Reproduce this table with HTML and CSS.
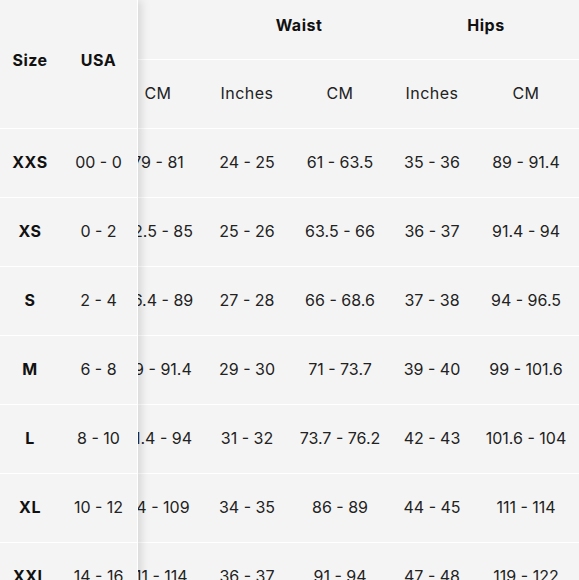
FILE: index.html
```html
<!DOCTYPE html>
<html lang="en">
<head>
<meta charset="utf-8">
<title>Size chart</title>
<link rel="stylesheet" href="styles.css">
</head>
<body>
<div class="chart">
  <div class="fixed">
    <table class="grid">
      <colgroup><col class="c-size"><col class="c-usa"></colgroup>
      <thead>
        <tr class="head"><th class="tall">Size</th><th class="tall">USA</th></tr>
      </thead>
      <tbody>
        <tr><th>XXS</th><td>00 - 0</td></tr>
        <tr><th>XS</th><td>0 - 2</td></tr>
        <tr><th>S</th><td>2 - 4</td></tr>
        <tr><th>M</th><td>6 - 8</td></tr>
        <tr><th>L</th><td>8 - 10</td></tr>
        <tr><th>XL</th><td>10 - 12</td></tr>
        <tr><th>XXL</th><td>14 - 16</td></tr>
      </tbody>
    </table>
  </div>
  <div class="scroller">
    <table class="grid wide">
      <colgroup>
        <col class="w1"><col class="w2"><col class="w3"><col class="w4"><col class="w5">
      </colgroup>
      <thead>
        <tr class="group"><th></th><th colspan="2">Waist</th><th colspan="2">Hips</th></tr>
        <tr class="sub"><th>CM</th><th>Inches</th><th>CM</th><th>Inches</th><th>CM</th></tr>
      </thead>
      <tbody>
        <tr><td>79 - 81</td><td>24 - 25</td><td>61 - 63.5</td><td>35 - 36</td><td>89 - 91.4</td></tr>
        <tr><td>82.5 - 85</td><td>25 - 26</td><td>63.5 - 66</td><td>36 - 37</td><td>91.4 - 94</td></tr>
        <tr><td>86.4 - 89</td><td>27 - 28</td><td>66 - 68.6</td><td>37 - 38</td><td>94 - 96.5</td></tr>
        <tr><td>89 - 91.4</td><td>29 - 30</td><td>71 - 73.7</td><td>39 - 40</td><td>99 - 101.6</td></tr>
        <tr><td>91.4 - 94</td><td>31 - 32</td><td>73.7 - 76.2</td><td>42 - 43</td><td>101.6 - 104</td></tr>
        <tr><td>94 - 109</td><td>34 - 35</td><td>86 - 89</td><td>44 - 45</td><td>111 - 114</td></tr>
        <tr><td>111 - 114</td><td>36 - 37</td><td>91 - 94</td><td>47 - 48</td><td>119 - 122</td></tr>
      </tbody>
    </table>
  </div>
</div>
</body>
</html>
```

FILE: styles.css
```css
html, body {
  margin: 0;
  padding: 0;
  background: #f4f4f4;
}

body {
  font-family: Inter, "Noto Sans", sans-serif;
  font-size: 16px;
  color: #222;
  letter-spacing: 0.5px;
  overflow: hidden;
}

.chart {
  display: flex;
  width: 579px;
  height: 580px;
  overflow: hidden;
}

.fixed {
  flex: 0 0 138px;
  border-right: 1px solid #ffffff;
  box-sizing: border-box;
  position: relative;
  z-index: 1;
  background: #f4f4f4;
  box-shadow: 3px 0 9px rgba(0, 0, 0, 0.13);
}

.scroller {
  flex: 1 1 auto;
  overflow: hidden;
}

.grid {
  border-collapse: collapse;
  table-layout: fixed;
}

.grid th,
.grid td {
  padding: 0 0 2px;
  text-align: center;
  vertical-align: middle;
  height: 66px;
  border-bottom: 1px solid #ffffff;
  white-space: nowrap;
}

.grid th {
  font-weight: 700;
  color: #111;
}

.grid td {
  font-weight: 400;
  letter-spacing: 0;
}

.c-size { width: 60px; }
.c-usa { width: 77px; }

.fixed .grid { width: 137px; }

.fixed th.tall {
  height: 120px;
  padding-bottom: 8px;
}

.wide {
  width: 470px;
  margin-left: -28px;
}

.w1 { width: 96px; }
.w2 { width: 82px; }
.w3 { width: 104px; }
.w4 { width: 80px; }
.w5 { width: 108px; }

.wide tr.group th {
  height: 50px;
  padding-bottom: 9px;
}

.wide tr.sub th {
  font-weight: 400;
  color: #222;
  height: 66px;
  padding-bottom: 2px;
}
```
